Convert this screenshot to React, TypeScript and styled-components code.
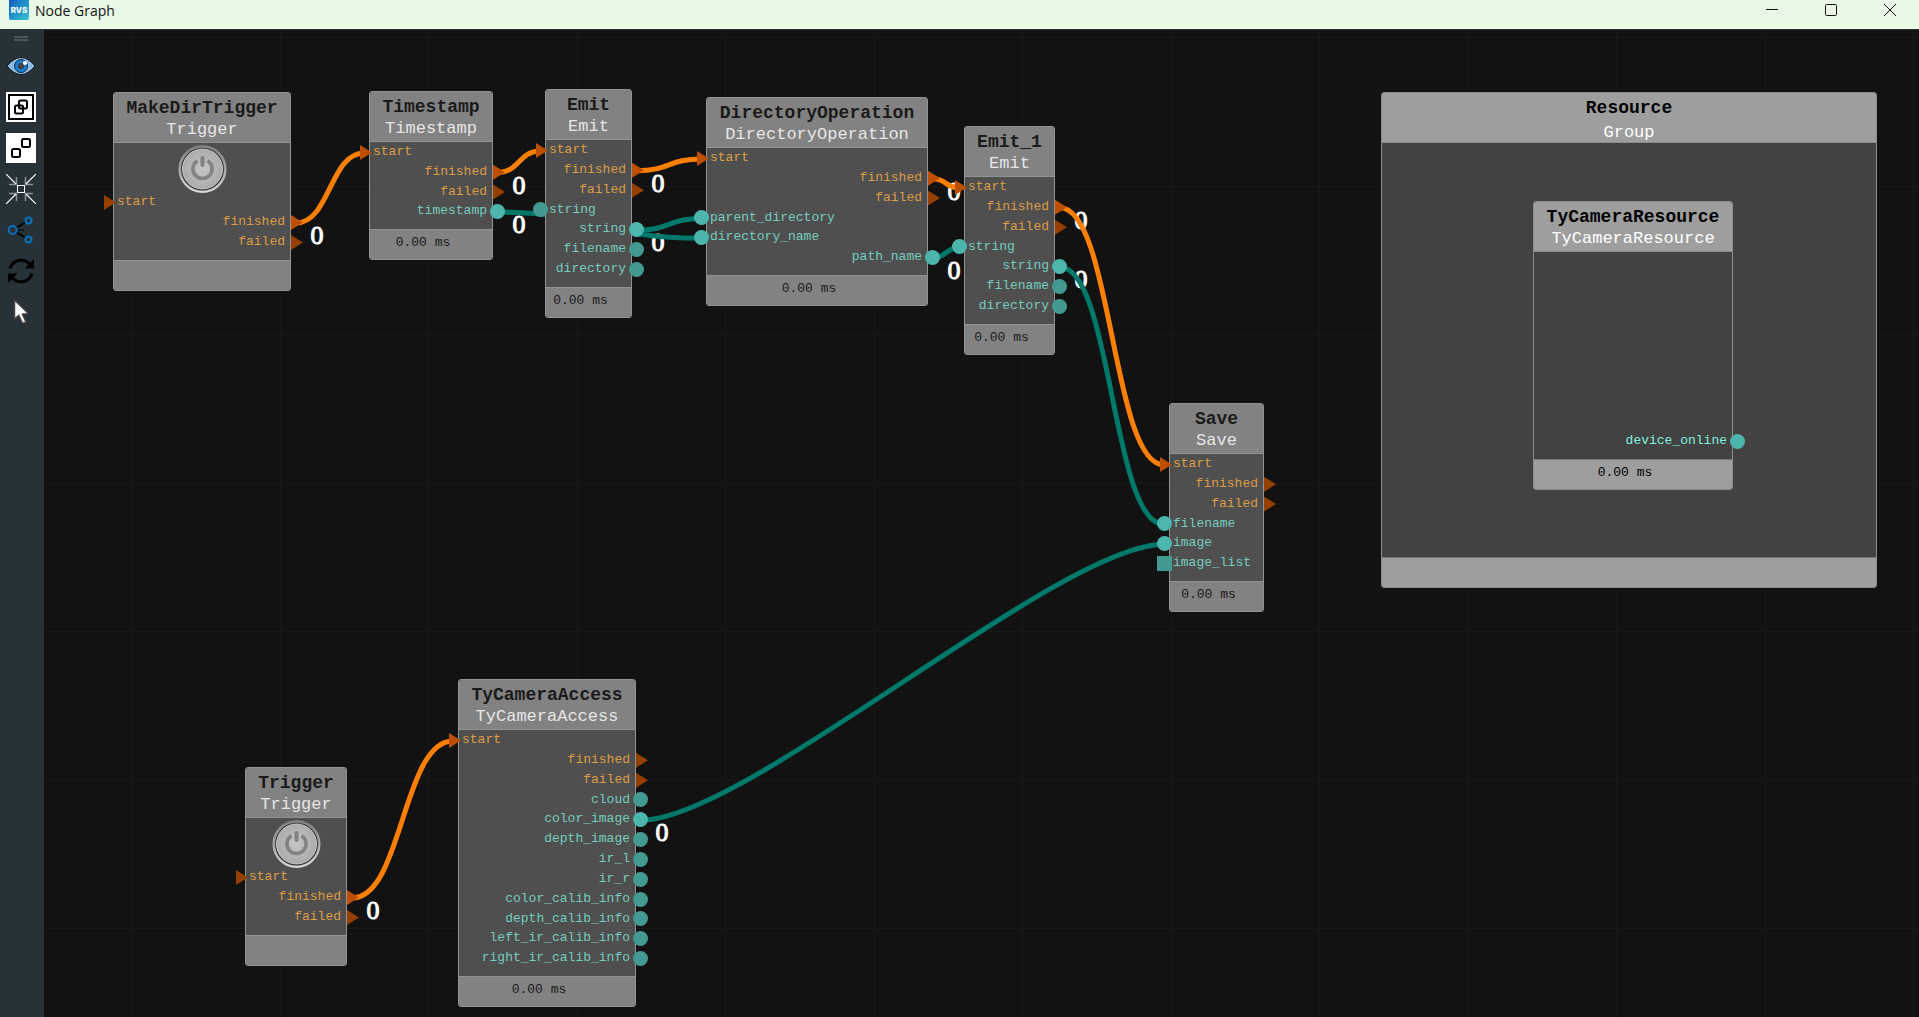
import React from "react";
import styled, { createGlobalStyle, css } from "styled-components";

type PortKind = "flow" | "data" | "list";
type Side = "in" | "out";

interface Port {
  name: string;
  side: Side;
  kind: PortKind;
  linked?: boolean;
}

interface GraphNode {
  id: string;
  title: string;
  type: string;
  x: number;
  y: number;
  width: number;
  height: number;
  ports: Port[];
  time?: string;
  power?: boolean;
  solid?: boolean;
}

interface Link {
  from: [string, number];
  to: [string, number];
}

const port = (side: Side, kind: PortKind, name: string, linked = false): Port => ({
  side,
  kind,
  name,
  linked,
});

const HEADER = 52;
const FOOTER = 31;
const BODY_PAD = 7;
const POWER = 49;
const ROW = 20;
const GRID = 297;
const MAX_BEND = 105;

const nodes: GraphNode[] = [
  {
    id: "mkdir", title: "MakeDirTrigger", type: "Trigger", x: 69, y: 62, width: 178, height: 199, power: true,
    ports: [port("in", "flow", "start"), port("out", "flow", "finished", true), port("out", "flow", "failed")],
  },
  {
    id: "timestamp", title: "Timestamp", type: "Timestamp", x: 325, y: 61, width: 124, height: 169, time: "0.00 ms",
    ports: [
      port("in", "flow", "start", true),
      port("out", "flow", "finished", true),
      port("out", "flow", "failed"),
      port("out", "data", "timestamp", true),
    ],
  },
  {
    id: "emit", title: "Emit", type: "Emit", x: 501, y: 59, width: 87, height: 229, time: "0.00 ms",
    ports: [
      port("in", "flow", "start", true),
      port("out", "flow", "finished", true),
      port("out", "flow", "failed"),
      port("in", "data", "string"),
      port("out", "data", "string", true),
      port("out", "data", "filename"),
      port("out", "data", "directory"),
    ],
  },
  {
    id: "dirop", title: "DirectoryOperation", type: "DirectoryOperation", x: 662, y: 67, width: 222, height: 209, time: "0.00 ms",
    ports: [
      port("in", "flow", "start", true),
      port("out", "flow", "finished", true),
      port("out", "flow", "failed"),
      port("in", "data", "parent_directory", true),
      port("in", "data", "directory_name", true),
      port("out", "data", "path_name", true),
    ],
  },
  {
    id: "emit1", title: "Emit_1", type: "Emit", x: 920, y: 96, width: 91, height: 229, time: "0.00 ms",
    ports: [
      port("in", "flow", "start", true),
      port("out", "flow", "finished", true),
      port("out", "flow", "failed"),
      port("in", "data", "string", true),
      port("out", "data", "string", true),
      port("out", "data", "filename"),
      port("out", "data", "directory"),
    ],
  },
  {
    id: "save", title: "Save", type: "Save", x: 1125, y: 373, width: 95, height: 209, time: "0.00 ms",
    ports: [
      port("in", "flow", "start", true),
      port("out", "flow", "finished"),
      port("out", "flow", "failed"),
      port("in", "data", "filename", true),
      port("in", "data", "image", true),
      port("in", "list", "image_list"),
    ],
  },
  {
    id: "trigger", title: "Trigger", type: "Trigger", x: 201, y: 737, width: 102, height: 199, power: true,
    ports: [port("in", "flow", "start"), port("out", "flow", "finished", true), port("out", "flow", "failed")],
  },
  {
    id: "camera", title: "TyCameraAccess", type: "TyCameraAccess", x: 414, y: 649, width: 178, height: 328, time: "0.00 ms",
    ports: [
      port("in", "flow", "start", true),
      port("out", "flow", "finished"),
      port("out", "flow", "failed"),
      port("out", "data", "cloud"),
      port("out", "data", "color_image", true),
      port("out", "data", "depth_image"),
      port("out", "data", "ir_l"),
      port("out", "data", "ir_r"),
      port("out", "data", "color_calib_info"),
      port("out", "data", "depth_calib_info"),
      port("out", "data", "left_ir_calib_info"),
      port("out", "data", "right_ir_calib_info"),
    ],
  },
  {
    id: "resource", title: "TyCameraResource", type: "TyCameraResource", x: 1489, y: 171, width: 200, height: 289,
    time: "0.00 ms", solid: true,
    ports: [port("out", "data", "device_online", true)],
  },
];

const links: Link[] = [
  { from: ["mkdir", 1], to: ["timestamp", 0] },
  { from: ["timestamp", 1], to: ["emit", 0] },
  { from: ["emit", 1], to: ["dirop", 0] },
  { from: ["dirop", 1], to: ["emit1", 0] },
  { from: ["emit1", 1], to: ["save", 0] },
  { from: ["trigger", 1], to: ["camera", 0] },
  { from: ["timestamp", 3], to: ["dirop", 4] },
  { from: ["emit", 4], to: ["dirop", 3] },
  { from: ["dirop", 5], to: ["emit1", 3] },
  { from: ["emit1", 4], to: ["save", 3] },
  { from: ["camera", 4], to: ["save", 4] },
];

const anchor = ([id, index]: [string, number]) => {
  const node = nodes.find((n) => n.id === id)!;
  const p = node.ports[index];
  const area = node.height - HEADER - FOOTER - BODY_PAD - (node.power ? POWER : 0);
  const pitch = Math.min(ROW, area / node.ports.length);
  const bottom = node.y + node.height - FOOTER - BODY_PAD;
  const y = bottom - (node.ports.length - index - 0.5) * pitch;
  const x = p.side === "out" ? node.x + node.width + 5 : node.x - 5;
  return { x, y, kind: p.kind };
};

const wirePath = (link: Link) => {
  const a = anchor(link.from);
  const b = anchor(link.to);
  const bend = Math.min((b.x - a.x) / 2, MAX_BEND);
  return `M${a.x} ${a.y}C${a.x + bend} ${a.y} ${b.x - bend} ${b.y} ${b.x} ${b.y}`;
};

const GlobalStyle = createGlobalStyle`
  * { box-sizing: border-box; }
  body { margin: 0; background: #121212; }
  button { border: 0; padding: 0; background: none; font: inherit; color: inherit; cursor: pointer; }
`;

const mono = css`
  font-family: "Liberation Mono", monospace;
`;

const Window = styled.div`
  display: flex;
  flex-direction: column;
  height: 100vh;
  overflow: hidden;
`;

const TitleBar = styled.header`
  display: flex;
  align-items: flex-start;
  flex: none;
  height: 30px;
  padding-left: 9px;
  background: #eaf9e6;
  border-bottom: 1px solid #263238;
`;

const AppName = styled.h1`
  flex: 1;
  margin: 0;
  padding-left: 6px;
  font: 400 14px/22px "Open Sans", sans-serif;
  color: #111;
`;

const WindowButton = styled.button`
  display: grid;
  place-items: center;
  width: 59px;
  height: 20px;
  color: #111;
`;

const Main = styled.div`
  display: flex;
  flex: 1;
  min-height: 0;
`;

const ToolBar = styled.nav`
  display: flex;
  flex-direction: column;
  align-items: flex-start;
  gap: 11px;
  flex: none;
  width: 44px;
  padding: 6px;
  background: #263238;
`;

const Handle = styled.div`
  width: 14px;
  height: 5px;
  margin: 0 8px -1px;
  border-top: 2px solid #4d565b;
  border-bottom: 2px solid #4d565b;
`;

const Tool = styled.button<{ $plain?: boolean }>`
  display: grid;
  place-items: center;
  width: 30px;
  height: 30px;
  background: ${(p) => (p.$plain ? "#fff" : "none")};
`;

const Canvas = styled.main`
  position: relative;
  flex: 1;
  overflow: hidden;
  background: #121212;
`;

const Layer = styled.svg`
  position: absolute;
  inset: 0;
  width: 100%;
  height: 100%;
`;

const Count = styled.span`
  position: absolute;
  width: 16px;
  margin: -13px 0 0 -8px;
  text-align: center;
  color: #fff;
  font: 400 26px/28px "Liberation Serif", serif;
  -webkit-text-stroke: 1px #fff;
`;

const Card = styled.section<{ $solid?: boolean }>`
  position: absolute;
  display: flex;
  flex-direction: column;
  border: 1px solid ${(p) => (p.$solid ? "#8c8c8c" : "#929292")};
  border-radius: 3px;
  background: ${(p) => (p.$solid ? "#424242" : "#4f4f4f")};
  ${mono}
`;

const CardHeader = styled.header<{ $solid?: boolean; $spaced?: boolean }>`
  display: flex;
  flex-direction: column;
  align-items: center;
  gap: ${(p) => (p.$spaced ? 3 : 0)}px;
  flex: none;
  height: 50px;
  padding-top: 4px;
  border-bottom: 1px solid ${(p) => (p.$solid ? "#8c8c8c" : "#929292")};
  border-radius: 2px 2px 0 0;
  background: ${(p) => (p.$solid ? "#9e9e9e" : "#828282")};
  color: ${(p) => (p.$solid ? "#000" : "#1a1a1a")};
`;

const Title = styled.h2`
  margin: 0;
  font-size: 18px;
  font-weight: 700;
  line-height: 22px;
`;

const Subtitle = styled.span<{ $solid?: boolean }>`
  font-size: 17px;
  line-height: 22px;
  color: ${(p) => (p.$solid ? "#fff" : "#e6e6e6")};
`;

const CardBody = styled.div`
  display: flex;
  flex: 1;
  flex-direction: column;
  justify-content: flex-end;
  align-items: stretch;
  padding: 1px 0 7px;
`;

const CardFooter = styled.footer<{ $solid?: boolean }>`
  flex: none;
  height: 30px;
  padding-right: 16px;
  border-top: 1px solid ${(p) => (p.$solid ? "#767676" : "#929292")};
  border-radius: 0 0 2px 2px;
  background: ${(p) => (p.$solid ? "#9e9e9e" : "#828282")};
  color: ${(p) => (p.$solid ? "#000" : "#1a1a1a")};
  font-size: 13px;
  line-height: 26px;
  text-align: center;
`;

const PowerButton = styled.button`
  align-self: center;
  flex: none;
  width: 49px;
  height: 49px;
`;

const PortRow = styled.div<{ $side: Side; $kind: PortKind; $solid?: boolean }>`
  position: relative;
  display: flex;
  flex: 1 1 0;
  min-height: 0;
  max-height: 20px;
  padding: 0 5px 0 3px;
  justify-content: ${(p) => (p.$side === "out" ? "flex-end" : "flex-start")};
  font-size: 13px;
  line-height: 18px;
  white-space: nowrap;
  color: ${(p) => (p.$kind === "flow" ? "#dd9c46" : p.$solid ? "#80f0de" : "#75ccbf")};
`;

const flowPort = css<{ $side: Side; $linked?: boolean }>`
  width: 12px;
  height: 15px;
  background: ${(p) => (p.$linked ? "#bf4f00" : "#964000")};
  clip-path: polygon(0 0, 100% 50%, 0 100%);
  ${(p) => (p.$side === "out" ? "right: -13px;" : "left: -10px;")}
`;

const dataPort = css<{ $side: Side; $kind: PortKind; $linked?: boolean }>`
  width: 15px;
  height: 15px;
  border-radius: ${(p) => (p.$kind === "list" ? 0 : "50%")};
  background: ${(p) => (p.$linked ? "#4db6ac" : "#439a90")};
  ${(p) => (p.$side === "out" ? "right: -13px;" : "left: -13px;")}
`;

const PortMark = styled.i<{ $side: Side; $kind: PortKind; $linked?: boolean }>`
  position: absolute;
  top: calc(50% - 8px);
  ${(p) => (p.$kind === "flow" ? flowPort : dataPort)}
`;

const PowerIcon = () => (
  <svg width="49" height="49" viewBox="0 0 49 49" aria-hidden="true">
    <defs>
      <linearGradient id="rim" x1="0" y1="0" x2="0" y2="1">
        <stop offset="0" stopColor="#7d7d7d" />
        <stop offset="1" stopColor="#d8d8d8" />
      </linearGradient>
      <radialGradient id="face">
        <stop offset="0" stopColor="#c6c6c6" />
        <stop offset="1" stopColor="#ababab" />
      </radialGradient>
    </defs>
    <circle cx="24.500" cy="25" r="23" fill="#8a8a8a" stroke="url(#rim)" strokeWidth="2" />
    <circle cx="24.500" cy="25" r="21.300" fill="#242424" />
    <circle cx="24.500" cy="25" r="20" fill="url(#face)" stroke="#c9c9c9" strokeWidth="1" />
    <path d="M19.500 16.700A9.600 9.600 0 1 0 29.500 16.700" fill="none" stroke="#828282" strokeWidth="3.600" />
    <path d="M24.500 14V21" stroke="#828282" strokeWidth="4" strokeLinecap="round" />
  </svg>
);

const LogoIcon = () => (
  <svg width="20" height="20" viewBox="0 0 20 20" aria-hidden="true">
    <defs>
      <linearGradient id="logo" x1="0" y1="0" x2="1" y2="1">
        <stop offset="0" stopColor="#0f5fc0" />
        <stop offset="1" stopColor="#38c6cf" />
      </linearGradient>
    </defs>
    <path d="M0 0H20V18Q20 20 18 20H2Q0 20 0 18Z" fill="url(#logo)" />
    <text x="10" y="13" textAnchor="middle" fill="#fff" fontFamily="Inter, sans-serif" fontSize="8" fontWeight="800">
      RVS
    </text>
  </svg>
);

const EyeIcon = () => (
  <svg width="30" height="30" viewBox="0 0 30 30" aria-hidden="true">
    <path d="M1 15Q8 6.500 15 6.500T29 15Q22 23.500 15 23.500T1 15Z" fill="#8dbbe8" stroke="#15191c" strokeWidth="1" />
    <circle cx="15" cy="15" r="6.500" fill="#1c7fd0" stroke="#10263a" strokeWidth="1" />
    <circle cx="15" cy="15" r="3.200" fill="#3d4347" />
    <circle cx="19" cy="12" r="2.100" fill="#fff" />
  </svg>
);

const GroupIcon = () => (
  <svg width="30" height="30" viewBox="0 0 30 30" fill="none" stroke="#000" strokeWidth="2" aria-hidden="true">
    <rect x="3" y="3" width="24" height="24" />
    <rect x="13" y="8.500" width="8" height="8" rx="1.500" />
    <rect x="9" y="13.500" width="8" height="8" rx="1.500" />
  </svg>
);

const UngroupIcon = () => (
  <svg width="30" height="30" viewBox="0 0 30 30" fill="none" stroke="#000" strokeWidth="2" aria-hidden="true">
    <rect x="16" y="6" width="8" height="8" rx="1.500" />
    <rect x="6" y="16" width="8" height="8" rx="1.500" />
  </svg>
);

const CenterIcon = () => (
  <svg width="30" height="30" viewBox="0 0 30 30" fill="none" aria-hidden="true">
    <path
      d="M3 10.500H10.500V3M27 10.500H19.500V3M3 19.500H10.500V27M27 19.500H19.500V27"
      stroke="#8d9498"
      strokeWidth="1.500"
    />
    <path d="M0 0L10 10M30 0L20 10M0 30L10 20M30 30L20 20" stroke="#fff" strokeWidth="1.200" />
    <rect x="11.500" y="11.500" width="7" height="7" stroke="#fff" />
  </svg>
);

const TreeIcon = () => (
  <svg width="30" height="30" viewBox="0 0 30 30" fill="none" aria-hidden="true">
    <path d="M10 13L20 7M10 17L20 23" stroke="#000" strokeWidth="1.800" />
    <path d="M11 15H18" stroke="#000" strokeWidth="1.500" strokeDasharray="1.500 1" />
    <g stroke="#0a72bd" strokeWidth="2">
      <circle cx="6.700" cy="15" r="4" />
      <circle cx="22.500" cy="5.500" r="3" />
      <circle cx="22.500" cy="24.500" r="3" />
    </g>
  </svg>
);

const RefreshIcon = () => (
  <svg width="30" height="30" viewBox="0 0 30 30" aria-hidden="true">
    <g fill="none" stroke="#000" strokeWidth="3">
      <path d="M4 12.500A11.500 11.500 0 0 1 23.500 8" />
      <path d="M26 17.500A11.500 11.500 0 0 1 6.500 22" />
    </g>
    <path d="M28 3V12.500H18.500Z" fill="#000" />
    <path d="M2 27V17.500H11.500Z" fill="#000" />
  </svg>
);

const CursorIcon = () => (
  <svg width="30" height="30" viewBox="0 0 30 30" aria-hidden="true">
    <path
      d="M8.500 3V22L12.800 18.200L16.600 26.500L20 25L16.300 17L22.500 16.800Z"
      fill="#fff"
      stroke="#4a4545"
      strokeWidth="1.500"
      strokeLinejoin="round"
    />
  </svg>
);

const tools = [
  { label: "Show or hide", icon: <EyeIcon /> },
  { label: "Group", icon: <GroupIcon />, plain: true },
  { label: "Ungroup", icon: <UngroupIcon />, plain: true },
  { label: "Center view", icon: <CenterIcon /> },
  { label: "Arrange", icon: <TreeIcon /> },
  { label: "Refresh", icon: <RefreshIcon /> },
  { label: "Select", icon: <CursorIcon /> },
];

const NodeCard = ({ node }: { node: GraphNode }) => (
  <Card $solid={node.solid} style={{ left: node.x, top: node.y, width: node.width, height: node.height }}>
    <CardHeader $solid={node.solid}>
      <Title>{node.title}</Title>
      <Subtitle $solid={node.solid}>{node.type}</Subtitle>
    </CardHeader>
    <CardBody>
      {node.power && (
        <PowerButton aria-label={`Run ${node.title}`}>
          <PowerIcon />
        </PowerButton>
      )}
      {node.ports.map((p, i) => (
        <PortRow key={i} $side={p.side} $kind={p.kind} $solid={node.solid}>
          {p.name}
          <PortMark $side={p.side} $kind={p.kind} $linked={p.linked} />
        </PortRow>
      ))}
    </CardBody>
    <CardFooter $solid={node.solid}>{node.time}</CardFooter>
  </Card>
);

const GridLines = () => (
  <Layer aria-hidden="true">
    <g stroke="#181818" strokeWidth="1" shapeRendering="crispEdges">
      {Array.from({ length: 20 }, (_, i) => {
        const x = 87 + Math.round((i * GRID) / 2);
        return <line key={`v${i}`} x1={x} x2={x} y1="2" y2="100%" />;
      })}
      {Array.from({ length: 14 }, (_, i) => {
        const y = 7 + Math.round((i * GRID) / 2);
        return <line key={`h${i}`} x1="2" x2="100%" y1={y} y2={y} />;
      })}
    </g>
  </Layer>
);

export default function App() {
  return (
    <Window>
      <GlobalStyle />
      <TitleBar>
        <LogoIcon />
        <AppName>Node Graph</AppName>
        <WindowButton aria-label="Minimize">
          <svg width="12" height="12" viewBox="0 0 12 12" stroke="currentColor">
            <path d="M0 5.500H12" />
          </svg>
        </WindowButton>
        <WindowButton aria-label="Maximize">
          <svg width="12" height="12" viewBox="0 0 12 12" fill="none" stroke="currentColor">
            <rect x="0.500" y="0.500" width="11" height="11" rx="1" />
          </svg>
        </WindowButton>
        <WindowButton aria-label="Close">
          <svg width="12" height="12" viewBox="0 0 12 12" stroke="currentColor">
            <path d="M0 0L12 12M12 0L0 12" />
          </svg>
        </WindowButton>
      </TitleBar>
      <Main>
        <ToolBar aria-label="Graph tools">
          <Handle />
          {tools.map((t) => (
            <Tool key={t.label} aria-label={t.label} $plain={t.plain}>
              {t.icon}
            </Tool>
          ))}
        </ToolBar>
        <Canvas>
          <GridLines />
          {links.map((l, i) => {
            const a = anchor(l.from);
            return (
              <Count key={i} style={{ left: a.x + 21, top: a.y + 12 }}>
                0
              </Count>
            );
          })}
          <Layer aria-hidden="true" fill="none" strokeWidth="5">
            {links.map((l, i) => (
              <path key={i} d={wirePath(l)} stroke={anchor(l.from).kind === "flow" ? "#ff8000" : "#00796b"} />
            ))}
          </Layer>
          <Card $solid style={{ left: 1337, top: 62, width: 496, height: 496 }}>
            <CardHeader $solid $spaced>
              <Title>Resource</Title>
              <Subtitle $solid>Group</Subtitle>
            </CardHeader>
            <CardBody />
            <CardFooter $solid />
          </Card>
          {nodes.map((n) => (
            <NodeCard key={n.id} node={n} />
          ))}
        </Canvas>
      </Main>
    </Window>
  );
}
